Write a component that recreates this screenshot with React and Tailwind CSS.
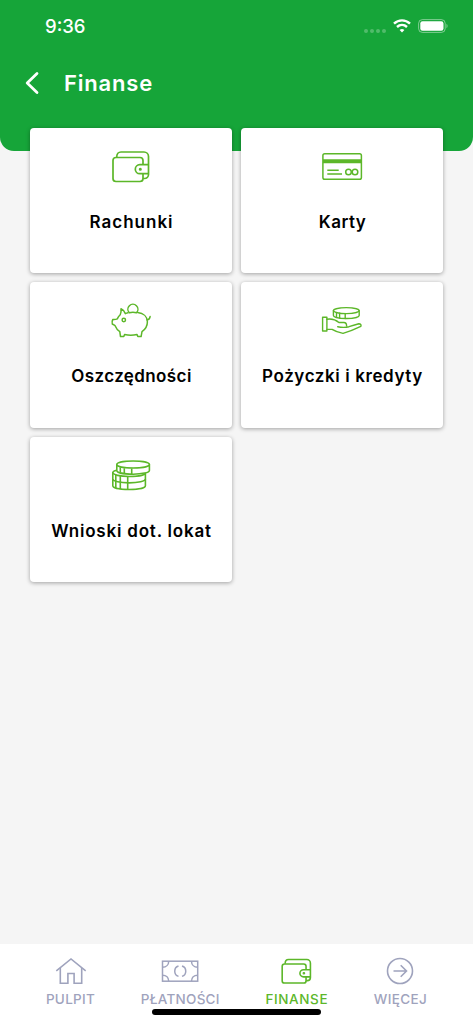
import clsx from "clsx"

function WalletIcon({ className, strokeWidth = 1.7 }) {
  return (
    <svg viewBox="0 0 44 44" fill="none" stroke="currentColor" strokeWidth={strokeWidth} className={className}>
      <path d="M34 19.7V15.5a3 3 0 0 0-3-3H7a3 3 0 0 0-3 3v18a3 3 0 0 0 3 3h24a3 3 0 0 0 3-3v-4.8" />
      <path d="M7.7 12.3C7.7 9 9.5 7 12 7h23a4.5 4.5 0 0 1 4.5 4.5v18c0 2.2-1.8 4-4 4H34" />
      <path d="M39.5 19.7H30.8a4.5 4.5 0 0 0 0 9h8.700" />
      <circle cx="31.3" cy="24.2" r="0.7" fill="currentColor" />
    </svg>
  )
}

function CardIcon({ className }) {
  return (
    <svg viewBox="0 0 44 44" fill="none" stroke="currentColor" strokeWidth="1.5" className={className}>
      <rect x="2.9" y="8.8" width="38.5" height="25.5" rx="1.8" />
      <path d="M3 16.2h38.500" strokeWidth="4" />
      <path d="M7.3 25.2h11.4M7.3 29h14.700" strokeWidth="1.6" />
      <circle cx="28.5" cy="27" r="2.8" />
      <circle cx="35" cy="27" r="2.8" />
    </svg>
  )
}

function PiggyIcon({ className }) {
  return (
    <svg viewBox="0 -0.8 44 44" fill="none" stroke="currentColor" strokeWidth="1.5" strokeLinejoin="round" strokeLinecap="round" className={className}>
      <path d="M19 13c-.9.2-1.8.5-2.6.9-.8-2.300-2.200-3.900-4.400-4.900.3 2.400 0 4.200-.8 6-1.300 1.100-2.200 2.400-2.900 4.100-1 .5-2.400.7-4.500.6-.9 1.500-1 3-.5 4.500l2.500 1.300c1.200 2.800 2.700 5 5 6.400l.7 4.900h3.300l.8-2.200c4.100 1 8.300 1 12.400 0l.8 2.200h3.300l.9-4.900c3.600-2.500 5.400-5.800 5.400-9.900 0-5.200-4-8.600-9.700-9.200" />
      <path d="M20.300 13a5 5 0 1 1 7.200 0c-2.400-.7-4.800-.7-7.200 0z" />
      <circle cx="14.8" cy="20.2" r="1.7" />
      <path d="M38.300 20c1.600-.2 2.500-1.200 2.800-3.200" />
    </svg>
  )
}

function LoanIcon({ className }) {
  return (
    <svg viewBox="0 0 44 44" fill="none" stroke="currentColor" strokeWidth="1.4" strokeLinejoin="round" strokeLinecap="round" className={className}>
      <ellipse cx="26.3" cy="11.6" rx="12.9" ry="3" />
      <path d="M13.400 11.600v4.900c0 1.700 5.800 3 12.900 3s12.900-1.300 12.900-3v-4.900" />
      <path d="M16.500 13.700v4.700M19.600 14.300v4.800M25.200 14.700v4.800" />
      <rect x="2.600" y="18.300" width="4.300" height="13.700" />
      <path d="M6.900 20.300c4.600-.8 8.400.2 12 3.200h5c1.600 0 2.700 1.400 2.700 3.500" />
      <path d="M17.700 27.700c4.100.9 7.800.9 11.300 0 3.400-1.200 6.700-2.300 9.800-3 1.800 0 2.700 1.300 2 2.700-5.500 2.700-11.300 5-17.800 7-4.100-.8-7.700-2-10.900-4H6.900" />
    </svg>
  )
}

function CoinsIcon({ className }) {
  return (
    <svg viewBox="0 0 44 44" fill="none" stroke="currentColor" strokeWidth="1.6" strokeLinejoin="round" className={className}>
      <ellipse cx="24.100" cy="10.500" rx="16.300" ry="3.500" />
      <path d="M7.800 10.500v5.900c0 2.200 7.300 3.800 16.300 3.800s16.300-1.700 16.300-3.800v-5.900" />
      <path d="M11.300 13.300v5.200M15.300 14.200v5.200M22.700 14.500v5.700" />
      <path d="M7.800 16.300c-2.600.6-4 1.400-4 2.300v13.200c0 2.200 7.300 3.700 16.300 3.700s16.300-1.500 16.300-3.700V19.500" />
      <path d="M3.800 18.600c0 2.200 7.300 3.900 16.300 3.900s16.300-1.500 16.300-3.500M3.800 25c0 2.200 7.300 3.900 16.300 3.900S36.400 27.200 36.400 25" />
      <path d="M6.800 20.500V34M11.300 21.700v13.500M18.700 22.500v13" />
    </svg>
  )
}

function HomeIcon() {
  return (
    <svg viewBox="0 0 36 32" fill="none" stroke="currentColor" strokeWidth="1.6" className="h-8 w-9">
      <path d="M3.300 15.800 18 4l14.700 11.800" />
      <path d="M7.300 13v15.200h7.600V18.500h6.200v9.700h7.600V13" />
    </svg>
  )
}

function BanknoteIcon() {
  return (
    <svg viewBox="0 0 40 32" fill="none" stroke="currentColor" strokeWidth="1.5" className="h-8 w-10">
      <rect x="2.500" y="6.200" width="35.200" height="20" />
      <path d="M8.700 6.200c0 3.600-2.500 6-6.200 6M31.500 6.200c0 3.600 2.500 6 6.200 6M2.500 20.200c3.700 0 6.200 2.400 6.200 6M37.700 20.200c-3.700 0-6.200 2.400-6.200 6" />
      <path d="M18.500 11c-5 1.500-5 8.900 0 10.400M22 11c5 1.500 5 8.900 0 10.400" />
    </svg>
  )
}

function MoreIcon() {
  return (
    <svg viewBox="0 0 32 32" fill="none" stroke="currentColor" strokeWidth="1.6" className="size-8">
      <circle cx="16" cy="16" r="12.500" />
      <path d="M9.500 16h12.700M16.700 10.300l5.800 5.700-5.800 5.700" />
    </svg>
  )
}

const tiles = [
  { label: "Rachunki", Icon: WalletIcon, tracking: "tracking-[1px]" },
  { label: "Karty", Icon: CardIcon, tracking: "tracking-[0.5px]" },
  { label: "Oszczędności", Icon: PiggyIcon, tracking: "tracking-[0.4px]" },
  { label: "Pożyczki i kredyty", Icon: LoanIcon, tracking: "tracking-[0.6px]" },
  { label: "Wnioski dot. lokat", Icon: CoinsIcon, tracking: "tracking-[0.8px]" },
]

const tabs = [
  { label: "PULPIT", icon: <HomeIcon />, className: "w-[49px] tracking-[0.3px]" },
  { label: "PŁATNOŚCI", icon: <BanknoteIcon />, className: "w-[79px] tracking-[0.25px]" },
  { label: "FINANSE", icon: <WalletIcon className="size-[35px]" strokeWidth={2} />, className: "w-[63px] tracking-[0.6px]", active: true },
  { label: "WIĘCEJ", icon: <MoreIcon />, className: "w-[53px] tracking-[0.4px]" },
]

function StatusBar() {
  return (
    <div className="flex h-[54px] items-center justify-between pb-px pl-[45px] pr-[25px]">
      <span className="font-['Inter'] text-[18.500px] font-medium leading-none">9:36</span>
      <div className="flex items-center pb-px">
        <div className="mt-[9px] flex gap-[2px] opacity-25">
          {[0, 1, 2, 3].map((i) => (
            <span key={i} className="size-1 rounded-full bg-white" />
          ))}
        </div>
        <svg viewBox="0 0 18 14" className="ml-[7px] h-[14px] w-[18px]" fill="none" stroke="currentColor" strokeWidth="2.4">
          <path d="M1 4.600C5.500.3 12.500.3 17 4.600" />
          <path d="M4 8c2.900-2.700 7.100-2.700 10 0" />
          <path d="M6.600 11C8 9.700 10 9.700 11.400 11L9 13.500z" fill="currentColor" stroke="none" />
        </svg>
        <svg viewBox="0 0 30 14" className="ml-[7px] h-[14px] w-[30px]" fill="none">
          <rect x=".6" y=".6" width="26.600" height="12.800" rx="3.800" stroke="white" strokeOpacity=".45" />
          <rect x="2.300" y="2.200" width="23.200" height="9.600" rx="2.200" fill="white" />
          <path d="M28.500 4.800c1.400.8 1.400 3.600 0 4.400z" fill="white" fillOpacity=".5" />
        </svg>
      </div>
    </div>
  )
}

export default function App() {
  return (
    <div className="relative flex h-[1024px] w-[473px] flex-col overflow-hidden bg-[#f5f5f5] font-['Inter',sans-serif]">
      <header className="h-[151px] shrink-0 rounded-b-[14px] bg-[#16a539] text-white">
        <StatusBar />
        <div className="flex h-[58px] items-center pl-[25px]">
          <svg viewBox="0 0 14 24" className="h-6 w-[14px]" fill="none" stroke="currentColor" strokeWidth="2.8" strokeLinecap="round" strokeLinejoin="round">
            <path d="M12 2.500 2.200 12 12 21.500" />
          </svg>
          <h1 className="ml-[25px] text-[22px] font-semibold tracking-[0.8px]">Finanse</h1>
        </div>
      </header>

      <main className="-mt-[23px] grid grid-cols-2 gap-[9px] px-[30px]">
        {tiles.map(({ label, Icon, tracking }) => (
          <button
            key={label}
            className="flex h-[145.300px] flex-col items-center rounded-[4px] bg-white pt-[17px] text-black shadow-[0_1px_4px_rgba(0,0,0,0.35)]"
          >
            <Icon className="size-11 text-[#5cb729]" />
            <span className={clsx("mt-[21px] whitespace-nowrap pl-px text-[17px] font-semibold leading-6", tracking)}>{label}</span>
          </button>
        ))}
      </main>

      <nav className="mt-auto flex h-[80px] shrink-0 justify-between bg-white px-[46px] pt-[11px]">
        {tabs.map(({ label, icon, className, active }) => (
          <button
            key={label}
            className={clsx("flex flex-col items-center", className, active ? "text-[#5cb729]" : "text-[#9fa3bd]")}
          >
            <span className="flex h-8 items-center justify-center">{icon}</span>
            <span className="mt-[3px] whitespace-nowrap text-[13.500px] font-medium leading-[18px]">{label}</span>
          </button>
        ))}
      </nav>

      {/* Home indicator */}
      <div className="absolute bottom-[9px] left-[152px] h-[6px] w-[169px] rounded-full bg-black" />
    </div>
  )
}
